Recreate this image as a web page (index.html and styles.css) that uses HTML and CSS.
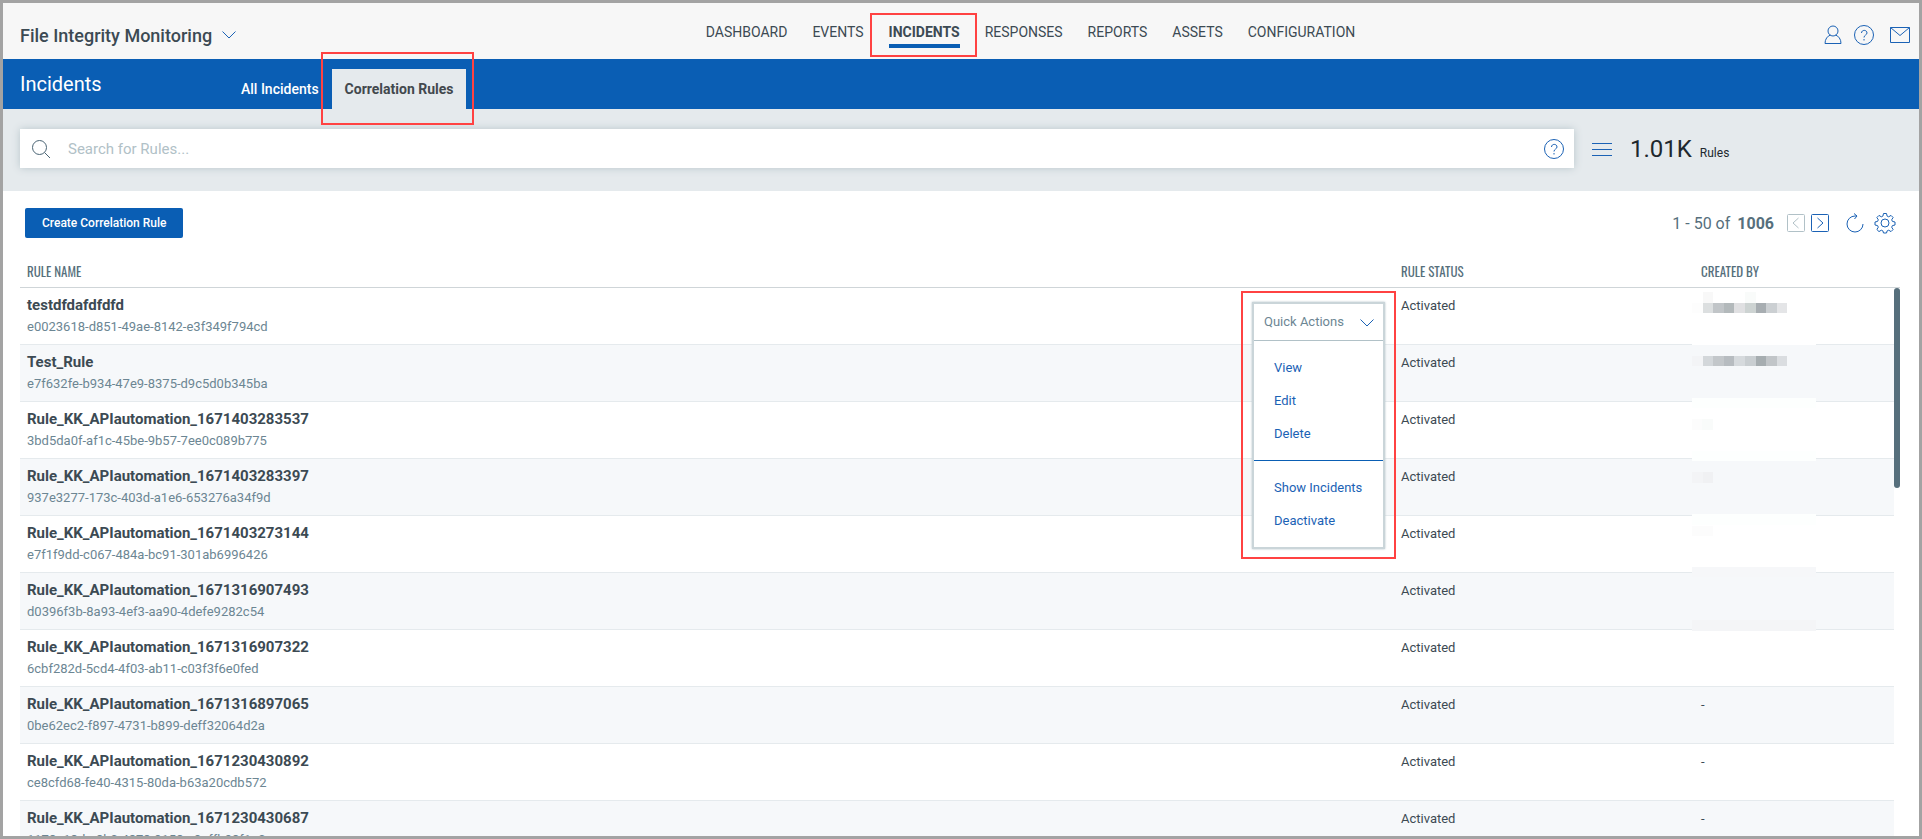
FILE: index.html
```html
<!DOCTYPE html>
<html lang="en">

<head>
    <meta charset="UTF-8">
    <meta name="viewport" content="width=device-width, initial-scale=1.0">
    <title>File Integrity Monitoring - Incidents</title>
    <link rel="stylesheet" href="styles.css">
</head>

<body>

<header class="topbar">
    <button class="app-switch">
        File Integrity Monitoring
        <svg width="14" height="8" viewBox="0 0 14 8"><path d="M.5 .5 7 7 13.500 .5"/></svg>
    </button>
    <nav class="main-nav">
        <a href="#">DASHBOARD</a>
        <a href="#">EVENTS</a>
        <a href="#" class="active marked">INCIDENTS</a>
        <a href="#">RESPONSES</a>
        <a href="#">REPORTS</a>
        <a href="#">ASSETS</a>
        <a href="#">CONFIGURATION</a>
    </nav>
    <div class="user-tools">
        <button class="icon-button" aria-label="Account">
            <svg width="18" height="20" viewBox="0 0 18 20"><circle cx="9" cy="6" r="5"/><path d="M1 18.500h16c0-4.500-2.500-7.500-5.500-8.500M1 18.500c0-4.500 2.500-7.500 5.500-8.500"/></svg>
        </button>
        <button class="icon-button" aria-label="Help">
            <svg width="22" height="22" viewBox="0 0 22 22"><circle cx="11" cy="11" r="9.500"/><path d="M8.500 9c0-3.500 5.500-3.500 5.500 0 0 2-3 2-3 4.500M11 15v1.500"/></svg>
        </button>
        <button class="icon-button mail" aria-label="Messages">
            <svg width="22" height="18" viewBox="0 0 22 18"><path d="M1.500 1.500h19v15h-19zM1.500 1.500 11 9.500l9.500-8"/></svg>
        </button>
    </div>
</header>

<div class="section-bar">
    <h1>Incidents</h1>
    <nav class="tabs">
        <a href="#">All Incidents</a>
        <a href="#" class="active marked">Correlation Rules</a>
    </nav>
</div>

<div class="search-area">
    <form class="search-box">
        <svg width="20" height="20" viewBox="0 0 20 20"><circle cx="8.500" cy="8.500" r="7"/><path d="M13.500 13.500 19 19"/></svg>
        <input type="text" placeholder="Search for Rules..." aria-label="Search for Rules">
        <button type="button" class="icon-button" aria-label="Search help">
            <svg width="22" height="22" viewBox="0 0 22 22"><circle cx="11" cy="11" r="9.500"/><path d="M8.500 9c0-3.500 5.500-3.500 5.500 0 0 2-3 2-3 4.500M11 15v1.500"/></svg>
        </button>
    </form>
    <div class="summary">
        <button class="icon-button" aria-label="Menu">
            <svg width="22" height="14" viewBox="0 0 22 14"><path d="M1 .5h20M1 6.500h20M1 12.500h20"/></svg>
        </button>
        <span class="count">1.01K</span>
        <span class="count-label">Rules</span>
    </div>
</div>

<main>
    <div class="toolbar">
        <button class="create-button">Create Correlation Rule</button>
        <div class="pager">
            <span class="range">1 - 50 of <b>1006</b></span>
            <button class="icon-button previous" disabled aria-label="Previous page">
                <svg width="18" height="18" viewBox="0 0 18 18"><rect x=".5" y=".5" width="17" height="17" rx="1"/><path d="M11.500 4 6 9l5.500 5"/></svg>
            </button>
            <button class="icon-button" aria-label="Next page">
                <svg width="18" height="18" viewBox="0 0 18 18"><rect x=".5" y=".5" width="17" height="17" rx="1"/><path d="M6.500 4 12 9l-5.500 5"/></svg>
            </button>
            <button class="icon-button refresh" aria-label="Refresh">
                <svg width="18" height="20" viewBox="0 0 18 20"><path d="M17 11a8 8 0 1 1-8-8h2M8 .5 11 3 8.500 6"/></svg>
            </button>
            <button class="icon-button" aria-label="Settings">
                <svg width="22" height="22" viewBox="0 0 22 22"><circle cx="11" cy="11" r="4"/><path d="M9.500 1.500h3l.6 2.600 1.600.7 2.300-1.400 2.100 2.100-1.400 2.300.7 1.600 2.600.6v3l-2.600.6-.7 1.600 1.400 2.300-2.100 2.100-2.300-1.400-1.600.7-.6 2.100h-3l-.6-2.100-1.600-.7L5 19.600l-2.100-2.100 1.400-2.300-.7-1.600L1 13v-3l2.600-.6.7-1.600-1.400-2.300L5 3.400l2.300 1.400 1.600-.7z"/></svg>
            </button>
        </div>
    </div>

    <div class="table-area">
        <table class="rules">
            <colgroup>
                <col>
                <col class="col-actions">
                <col class="col-status">
                <col class="col-creator">
            </colgroup>
            <thead>
                <tr><th>RULE NAME</th><th></th><th>RULE STATUS</th><th>CREATED BY</th></tr>
            </thead>
            <tbody>
                <tr>
                    <td><a href="#">testdfdafdfdfd</a><small>e0023618-d851-49ae-8142-e3f349f794cd</small></td>
                    <td class="actions">
                        <div class="quick-actions marked">
                            <div class="menu">
                                <button class="menu-title">
                                    Quick Actions
                                    <svg width="14" height="10" viewBox="0 0 14 10"><path d="M.5 2.500 7 9l6.500-6.500"/></svg>
                                </button>
                                <ul>
                                    <li><a href="#">View</a></li>
                                    <li><a href="#">Edit</a></li>
                                    <li><a href="#">Delete</a></li>
                                </ul>
                                <ul>
                                    <li><a href="#">Show Incidents</a></li>
                                    <li><a href="#">Deactivate</a></li>
                                </ul>
                            </div>
                        </div>
                    </td>
                    <td>Activated</td>
                    <td class="creator">
                        <!-- hidden user names -->
                        <svg class="redacted" width="124" height="343" viewBox="0 0 124 343">
                            <path fill="#fff" d="M0 56h124v1H0z"/>
                            <path fill="#f8f8f8" d="M11 4h10v11H11z"/>
                            <path fill="#f9fbfa" d="M53 4h11v11H53z"/>
                            <path fill="#fdfdfd" d="M0 15h11v10H0z"/>
                            <path fill="#dcdfe0" d="M11 15h10v10H11z"/>
                            <path fill="#c1c5c8" d="M21 15h11v10H21z"/>
                            <path fill="#b3b9bb" d="M32 15h10v10H32z"/>
                            <path fill="#e0e0e2" d="M42 15h11v10H42z"/>
                            <path fill="#cdd3d2" d="M53 15h11v10H53z"/>
                            <path fill="#a7adb1" d="M64 15h10v10H64z"/>
                            <path fill="#cbcfd2" d="M74 15h11v10H74z"/>
                            <path fill="#e4e5e7" d="M85 15h10v10H85z"/>
                            <path fill="#f3f4f6" d="M0 68h11v10H0z"/>
                            <path fill="#d3d7da" d="M11 68h10v10H11z"/>
                            <path fill="#c3c7ca" d="M21 68h11v10H21z"/>
                            <path fill="#b7bcc0" d="M32 68h10v10H32z"/>
                            <path fill="#d6dadd" d="M42 68h11v10H42z"/>
                            <path fill="#c9ced1" d="M53 68h11v10H53z"/>
                            <path fill="#a6adb0" d="M64 68h10v10H64z"/>
                            <path fill="#c1c5c8" d="M74 68h11v10H74z"/>
                            <path fill="#dadde0" d="M85 68h10v10H85z"/>
                            <path fill="#fdfffe" d="M0 110h124v10H0zM0 163h124v10H0zM0 226h124v11H0z"/>
                            <path fill="#fcfcfc" d="M0 131h10v11H0zM0 238h21v10H0z"/>
                            <path fill="#f9fbfa" d="M10 131h11v11H10z"/>
                            <path fill="#f3f4f6" d="M0 184h11v11H0z"/>
                            <path fill="#f0f1f3" d="M11 184h10v11H11z"/>
                            <path fill="#f6f7f9" d="M0 279h124v10H0z"/>
                            <path fill="#f4f5f7" d="M0 332h124v11H0z"/>
                        </svg>
                    </td>
                </tr>
                <tr>
                    <td><a href="#">Test_Rule</a><small>e7f632fe-b934-47e9-8375-d9c5d0b345ba</small></td>
                    <td></td>
                    <td>Activated</td>
                    <td></td>
                </tr>
                <tr>
                    <td><a href="#">Rule_KK_APIautomation_1671403283537</a><small>3bd5da0f-af1c-45be-9b57-7ee0c089b775</small></td>
                    <td></td>
                    <td>Activated</td>
                    <td></td>
                </tr>
                <tr>
                    <td><a href="#">Rule_KK_APIautomation_1671403283397</a><small>937e3277-173c-403d-a1e6-653276a34f9d</small></td>
                    <td></td>
                    <td>Activated</td>
                    <td></td>
                </tr>
                <tr>
                    <td><a href="#">Rule_KK_APIautomation_1671403273144</a><small>e7f1f9dd-c067-484a-bc91-301ab6996426</small></td>
                    <td></td>
                    <td>Activated</td>
                    <td></td>
                </tr>
                <tr>
                    <td><a href="#">Rule_KK_APIautomation_1671316907493</a><small>d0396f3b-8a93-4ef3-aa90-4defe9282c54</small></td>
                    <td></td>
                    <td>Activated</td>
                    <td></td>
                </tr>
                <tr>
                    <td><a href="#">Rule_KK_APIautomation_1671316907322</a><small>6cbf282d-5cd4-4f03-ab11-c03f3f6e0fed</small></td>
                    <td></td>
                    <td>Activated</td>
                    <td></td>
                </tr>
                <tr>
                    <td><a href="#">Rule_KK_APIautomation_1671316897065</a><small>0be62ec2-f897-4731-b899-deff32064d2a</small></td>
                    <td></td>
                    <td>Activated</td>
                    <td>-</td>
                </tr>
                <tr>
                    <td><a href="#">Rule_KK_APIautomation_1671230430892</a><small>ce8cfd68-fe40-4315-80da-b63a20cdb572</small></td>
                    <td></td>
                    <td>Activated</td>
                    <td>-</td>
                </tr>
                <tr>
                    <td><a href="#">Rule_KK_APIautomation_1671230430687</a><small>1178a18d-a8b0-4878-9158-a9effb98f1a0</small></td>
                    <td></td>
                    <td>Activated</td>
                    <td>-</td>
                </tr>
            </tbody>
        </table>
        <div class="scroll-track"><div class="scroll-thumb"></div></div>
    </div>
</main>

</body>

</html>
```

FILE: styles.css
```css
* {
    box-sizing: border-box;
}

body {
    display: flex;
    flex-direction: column;
    height: 100vh;
    margin: 0;
    border: 3px solid #a3a3a3;
    overflow: hidden;
    font-family: Roboto, Arial, sans-serif;
    font-size: 13px;
    color: #3c4a53;
    background-color: #fff;
}

a {
    color: inherit;
    text-decoration: none;
}

button {
    font-family: inherit;
    color: inherit;
    border: none;
    background: none;
    padding: 0;
    cursor: pointer;
}

svg {
    display: block;
    fill: none;
    stroke: #1b62b5;
}

/* Red frame around highlighted parts */
.marked {
    position: relative;
}

.marked::after {
    content: "";
    position: absolute;
    border: 2px solid #ff4242;
    pointer-events: none;
    z-index: 2;
}

/* Top bar */
.topbar {
    display: grid;
    grid-template-columns: 36% auto 1fr;
    flex: none;
    height: 56px;
    padding: 0 8px 0 17px;
    background-color: #f7f7f7;
}

.app-switch {
    display: flex;
    align-items: center;
    justify-self: start;
    gap: 10px;
    padding-top: 8px;
    font-size: 18px;
    font-weight: 500;
}

.main-nav {
    display: flex;
    gap: 25px;
    padding: 18px 0 0 5px;
}

.main-nav a {
    height: 27px;
    font-size: 14px;
    line-height: 22px;
}

.main-nav .active {
    font-weight: 700;
    border-bottom: 4px solid #0a5eb4;
}

.main-nav .marked::after {
    inset: -8px -17px -13px -19px;
}

.user-tools {
    display: flex;
    align-items: center;
    justify-self: end;
    gap: 11px;
    padding-top: 8px;
}

.mail {
    margin-left: 3px;
}

/* Blue bar with tabs */
.section-bar {
    display: flex;
    flex: none;
    height: 50px;
    padding-left: 17px;
    color: #fff;
    background-color: #0a5eb4;
}

.section-bar h1 {
    width: 221px;
    margin: 0;
    font-size: 20px;
    font-weight: 400;
    line-height: 50px;
}

.tabs {
    display: flex;
    align-items: flex-end;
    gap: 13px;
    font-size: 14px;
    font-weight: 500;
}

.tabs a {
    height: 40px;
    line-height: 40px;
}

.tabs .active {
    padding: 0 13px;
    font-weight: 700;
    color: #42484d;
    background-color: #e5eaed;
}

.tabs .marked::after {
    inset: -17px -8px -16px -11px;
}

/* Search */
.search-area {
    display: flex;
    align-items: center;
    flex: none;
    height: 82px;
    padding: 0 17px 3px;
    background-color: #e5eaed;
}

.search-box {
    display: flex;
    align-items: center;
    flex: 1;
    height: 39px;
    padding: 0 9px 0 11px;
    background-color: #fff;
    box-shadow: 0 0 8px #b8c6cb;
}

.search-box > svg {
    stroke: #4a6474;
}

.search-box input {
    flex: 1;
    padding: 0 17px;
    border: none;
    outline: none;
    font-family: inherit;
    font-size: 15px;
}

.search-box input::placeholder {
    color: #b1c1c7;
}

.summary {
    display: flex;
    align-items: baseline;
    width: 328px;
    padding-left: 17px;
    color: #20282d;
}

.count {
    margin: 0 8px 0 17px;
    font-size: 24px;
}

.count-label {
    font-size: 12px;
}

/* Toolbar */
main {
    display: flex;
    flex-direction: column;
    flex: 1;
    min-height: 0;
    padding: 0 19px 0 17px;
}

.toolbar {
    display: flex;
    align-items: center;
    justify-content: space-between;
    flex: none;
    padding: 17px 4px 17px 5px;
}

.create-button {
    height: 30px;
    padding: 0 17px;
    border-radius: 2px;
    font-size: 12px;
    font-weight: 500;
    color: #fff;
    background-color: #0a5eb4;
}

.pager {
    display: flex;
    align-items: center;
    gap: 6px;
}

.range {
    margin-right: 7px;
    font-size: 16px;
    color: #566f7c;
}

.range b {
    margin-left: 3px;
}

.previous svg {
    stroke: #b1c1c7;
}

.refresh {
    margin: 0 4px 0 11px;
}

/* Rules table */
.table-area {
    display: flex;
    flex: 1;
    align-items: flex-start;
    min-height: 0;
}

.rules {
    flex: 1;
    border-collapse: separate;
    border-spacing: 0;
    table-layout: fixed;
}

.col-actions {
    width: 153px;
}

.col-status {
    width: 300px;
}

.col-creator {
    width: 200px;
}

.rules th {
    height: 33px;
    padding: 0 7px;
    border-bottom: 1px solid #cfd5d8;
    font-family: Oswald, "Liberation Sans Narrow", Roboto, sans-serif;
    font-size: 13px;
    font-weight: 400;
    line-height: 18px;
    text-align: left;
    color: #566f7c;
}

.rules td {
    height: 57px;
    padding: 8px 7px 0;
    border-bottom: 1px solid #e5eaed;
    line-height: 20px;
    vertical-align: top;
}

.rules tbody tr:nth-child(even) {
    background-color: #f6f8fa;
}

.rules td > a {
    display: block;
    font-size: 15px;
    font-weight: 700;
    line-height: 18px;
}

.rules small {
    display: block;
    font-size: 13px;
    line-height: 26px;
    color: #6c8693;
}

.rules .creator {
    position: relative;
}

.redacted {
    position: absolute;
    top: 0;
    left: -2px;
    stroke: none;
}

.scroll-track {
    width: 6px;
    margin-top: 32px;
    border-top: 1px solid #cfd5d8;
}

.scroll-thumb {
    height: 200px;
    border-radius: 3px;
    background-color: #566f7c;
}

/* Quick actions menu */
.rules .actions {
    position: relative;
    padding: 0;
}

.quick-actions {
    position: absolute;
    top: 14px;
    right: 9px;
    width: 133px;
    z-index: 1;
}

.quick-actions::after {
    inset: -11px -11px -10px;
}

.menu {
    border: 2px solid #cad5d9;
    background-color: #fff;
    box-shadow: 0 0 2px #b1c1c7;
}

.menu-title {
    display: flex;
    align-items: center;
    justify-content: space-between;
    width: 100%;
    height: 37px;
    padding: 0 9px 1px 10px;
    border-bottom: 1px solid #b1c1c7;
    font-size: 13px;
    color: #6c8693;
}

.menu ul {
    margin: 0;
    padding: 10px 20px;
    list-style: none;
    color: #1b62b5;
}

.menu ul + ul {
    border-top: 1px solid #0a5eb4;
}

.menu li {
    line-height: 33px;
    white-space: nowrap;
}
```
